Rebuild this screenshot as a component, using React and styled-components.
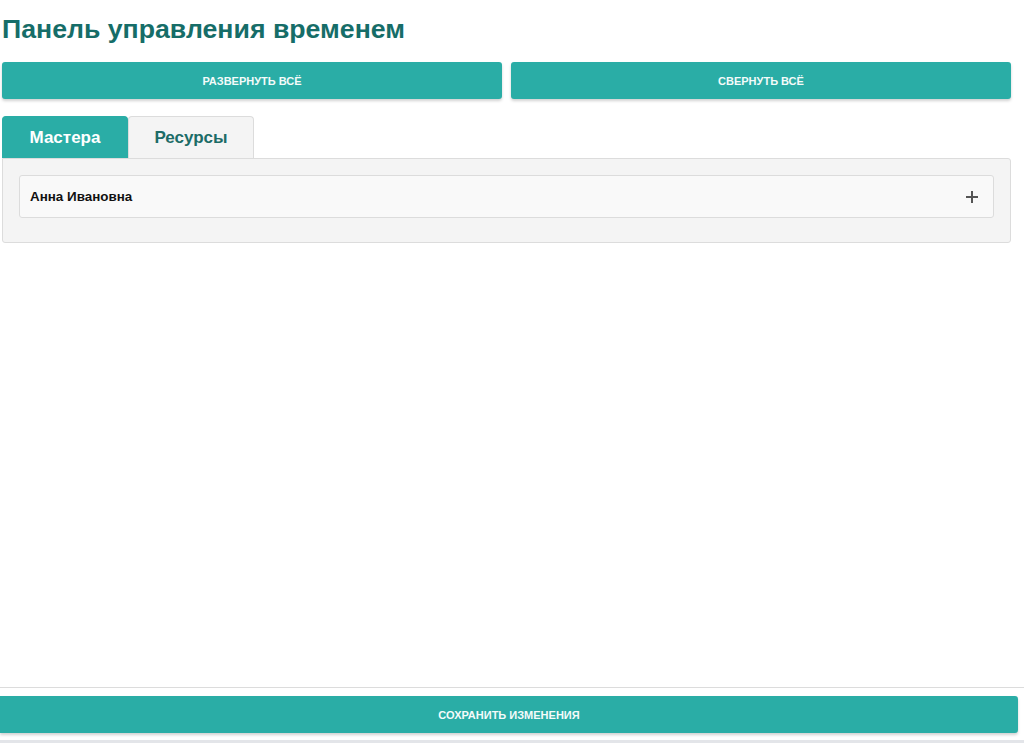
import React, { useState } from "react";
import styled, { createGlobalStyle } from "styled-components";

const Global = createGlobalStyle`
  html, body { margin: 0; padding: 0; background: #fff; }
  body { font-family: "Liberation Sans", Arial, sans-serif; }
  * { box-sizing: border-box; }
`;

const Page = styled.div`
  min-height: 100vh;
  display: flex;
  flex-direction: column;
`;

const Main = styled.main`
  flex: 1;
  padding: 0 13px 0 2px;
`;

const Title = styled.h1`
  margin: 0;
  padding-top: 13px;
  height: 44px;
  font-size: 26.7px;
  font-weight: 700;
  color: #166d68;
  line-height: 32px;
`;

const ButtonRow = styled.div`
  display: grid;
  grid-template-columns: 1fr 1fr;
  gap: 9px;
  margin-top: 18px;
`;

const ActionButton = styled.button`
  height: 37px;
  border: none;
  border-radius: 3px;
  background: #2aada6;
  color: #f4fbfa;
  font-family: "Liberation Sans", Arial, sans-serif;
  font-size: 11px;
  font-weight: 700;
  text-transform: uppercase;
  box-shadow: 0 2px 3px rgba(0, 0, 0, 0.18);
  cursor: pointer;
  width: 100%;
`;

const Tabs = styled.div`
  display: flex;
  margin-top: 17px;
`;

const Tab = styled.button`
  width: 126px;
  height: 42px;
  border: 1px solid ${(p) => (p.$active ? "#2aada6" : "#dcdcdc")};
  border-bottom: none;
  border-radius: 4px 4px 0 0;
  background: ${(p) => (p.$active ? "#2aada6" : "#f4f4f4")};
  color: ${(p) => (p.$active ? "#ffffff" : "#1c6c67")};
  font-family: "Liberation Sans", Arial, sans-serif;
  font-size: 17px;
  font-weight: 700;
  cursor: pointer;
  padding: 0;
`;

const Panel = styled.section`
  background: #f4f4f4;
  border: 1px solid #dcdcdc;
  border-radius: 0 3px 3px 3px;
  padding: 16px 16px 24px 16px;
`;

const Item = styled.div`
  height: 43px;
  display: flex;
  align-items: center;
  justify-content: space-between;
  padding: 0 14px 0 10px;
  background: #f9f9f9;
  border: 1px solid #dcdcdc;
  border-radius: 3px;
`;

const ItemName = styled.span`
  font-size: 13.4px;
  font-weight: 700;
  color: #111;
`;

const ToggleIcon = styled.svg`
  width: 14px;
  height: 14px;
  display: block;
`;

const Footer = styled.footer`
  border-top: 1px solid #dcdcdc;
  padding: 8px 6px 10px 0;
  background: #fff;
  box-shadow: inset 0 -3px 0 #e3e5e9;
`;

const SaveButton = styled(ActionButton)`
  border-radius: 0 3px 3px 0;
`;

const masters = ["Анна Ивановна"];

export default function App() {
  const [tab, setTab] = useState("masters");
  return (
    <Page>
      <Global />
      <Main>
        <Title>Панель управления временем</Title>
        <ButtonRow>
          <ActionButton>Развернуть всё</ActionButton>
          <ActionButton>Свернуть всё</ActionButton>
        </ButtonRow>
        <Tabs>
          <Tab $active={tab === "masters"} onClick={() => setTab("masters")}>
            Мастера
          </Tab>
          <Tab $active={tab === "resources"} onClick={() => setTab("resources")}>
            Ресурсы
          </Tab>
        </Tabs>
        <Panel>
          {masters.map((name) => (
            <Item key={name}>
              <ItemName>{name}</ItemName>
              <ToggleIcon viewBox="0 0 14 14">
                <path d="M7 1v12M1 7h12" stroke="#555" strokeWidth="2" fill="none" />
              </ToggleIcon>
            </Item>
          ))}
        </Panel>
      </Main>
      <Footer>
        <SaveButton>Сохранить изменения</SaveButton>
      </Footer>
    </Page>
  );
}
